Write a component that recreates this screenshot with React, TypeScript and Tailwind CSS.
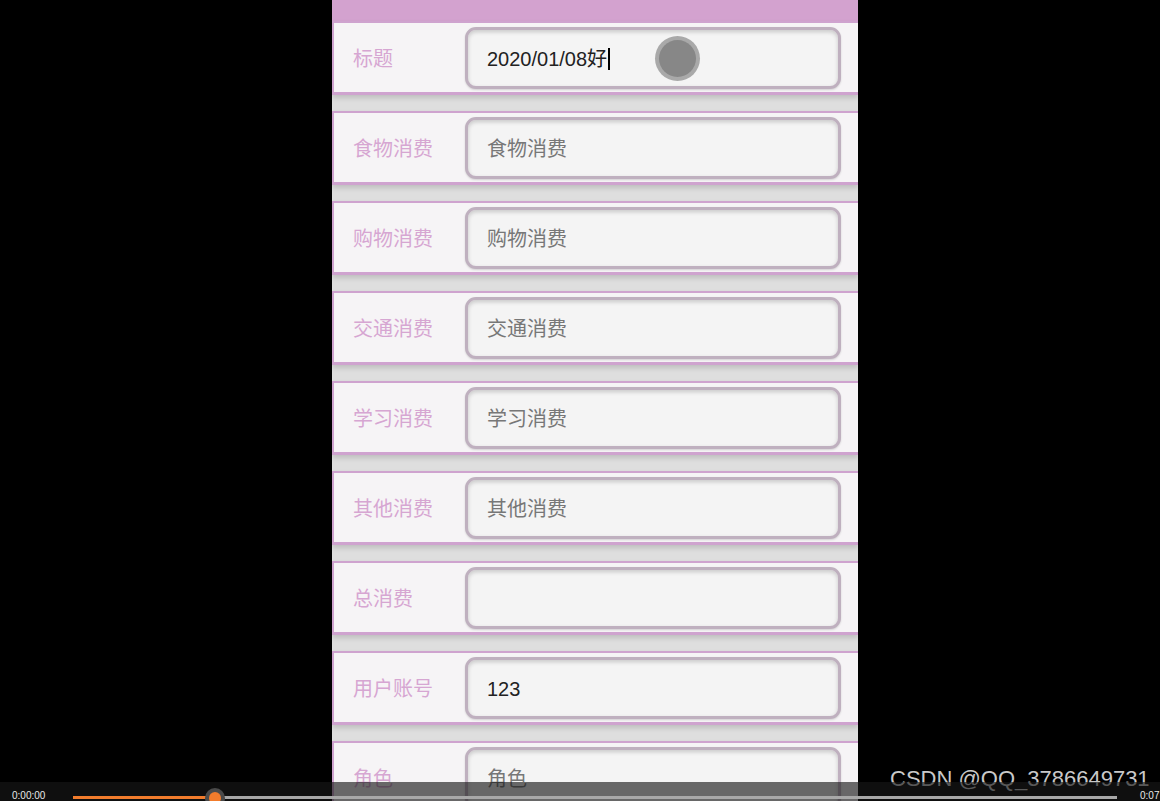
import React from 'react';

const rows = [
  { label: '标题', value: '2020/01/08好', placeholder: '标题', caret: true },
  { label: '食物消费', value: '', placeholder: '食物消费' },
  { label: '购物消费', value: '', placeholder: '购物消费' },
  { label: '交通消费', value: '', placeholder: '交通消费' },
  { label: '学习消费', value: '', placeholder: '学习消费' },
  { label: '其他消费', value: '', placeholder: '其他消费' },
  { label: '总消费', value: '', placeholder: '' },
  { label: '用户账号', value: '123', placeholder: '用户账号' },
  { label: '角色', value: '', placeholder: '角色' },
];

const font = { fontFamily: '"Liberation Sans", "Noto Sans CJK SC", sans-serif' };

function Row({ label, value, placeholder, caret }: { label: string; value: string; placeholder: string; caret?: boolean }) {
  return (
    <div className="h-[74px] shrink-0 flex items-center border-l-2 border-t-2 border-b-[3px] border-[#cfa3cf] bg-[#f6f4f6] shadow-[0_3px_5px_rgba(0,0,0,0.14)]">
      <div className="w-[131px] pl-[19px] pt-[3px] text-[20px] text-[#d6a6d2]">{label}</div>
      <div className="h-[62px] w-[376px] rounded-[11px] border-[3px] border-[#bfb0bf] bg-[#f4f4f4] shadow-[inset_0_2px_4px_rgba(0,0,0,0.18),0_1px_2px_rgba(0,0,0,0.15)] flex items-center pl-[19px] pt-[3px] text-[20px]">
        {value ? (
          <span className="text-[#222]">{value}</span>
        ) : (
          <span className="text-[#777]">{placeholder}</span>
        )}
        {caret && <span className="ml-[1px] inline-block h-[22px] w-[1.5px] bg-black" />}
      </div>
    </div>
  );
}

export default function App() {
  return (
    <div className="relative h-[801px] w-[1160px] overflow-hidden bg-black" style={font}>
      <div className="ml-[332px] w-[526px] h-[801px] bg-[#dedede] flex flex-col gap-[16px] overflow-hidden">
        <div className="flex flex-col">
          <div className="h-[21px] shrink-0 bg-[#d3a2cf]" />
          <Row {...rows[0]} />
        </div>
        {rows.slice(1).map((r) => (
          <Row key={r.label} {...r} />
        ))}
      </div>

      {/* pointer highlight */}
      <div className="absolute left-[655px] top-[36px] h-[45px] w-[45px] rounded-full bg-[#a9a9a9] flex items-center justify-center">
        <div className="h-[37px] w-[37px] rounded-full bg-[#878787]" />
      </div>

      {/* watermark */}
      <div className="absolute left-[890px] top-[766px] whitespace-nowrap text-[22px] leading-[26px] text-[#c9c9c9]" style={font}>
        CSDN @QQ_3786649731
      </div>

      {/* video controls */}
      <div className="absolute bottom-0 left-0 h-[19px] w-full bg-[rgba(24,24,24,0.64)]">
        <div className="absolute left-[12px] top-[9px] text-[10px] leading-none text-[#e8e8e8]">0:00:00</div>
        <div className="absolute left-[1140px] top-[9px] text-[10px] leading-none text-[#e8e8e8]">0:07</div>
        <div className="absolute left-[73px] top-[14px] h-[3px] w-[142px] bg-[#f27c2c]" />
        <div className="absolute left-[215px] top-[14px] h-[3px] w-[902px] bg-[#a8a8a8]" />
        <div className="absolute left-[205px] top-[6px] h-[20px] w-[20px] rounded-full bg-[#4a4a4a] flex items-center justify-center">
          <div className="h-[12px] w-[12px] rounded-full bg-[#f27c2c]" />
        </div>
      </div>
    </div>
  );
}
